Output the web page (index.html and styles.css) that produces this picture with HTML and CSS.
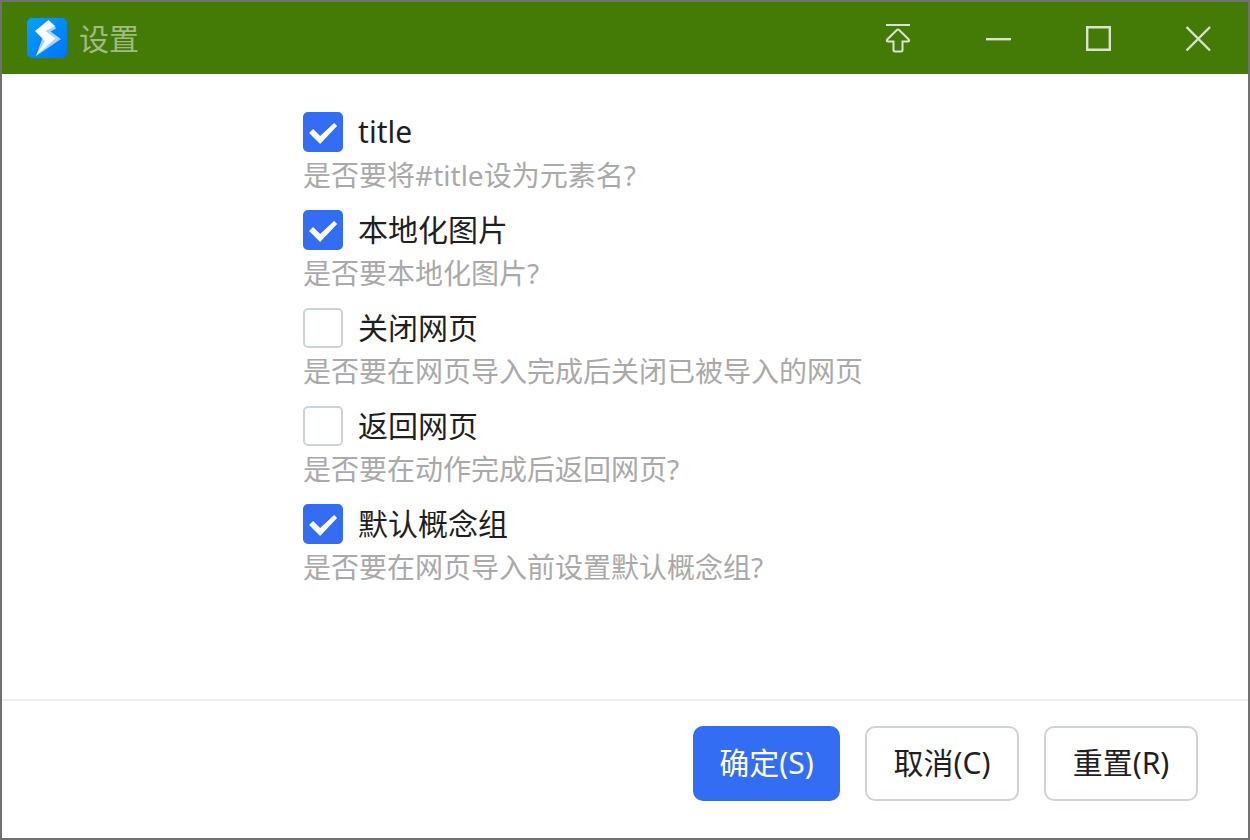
FILE: index.html
```html
<!DOCTYPE html>
<html lang="zh-CN">
<head>
    <meta charset="UTF-8">
    <meta name="viewport" content="width=device-width, initial-scale=1.0">
    <title>设置</title>
    <link rel="stylesheet" href="styles.css">
</head>
<body>
    <div class="window">
        <header class="titlebar">
            <svg class="logo" viewBox="0 0 40 40" aria-hidden="true">
                <defs>
                    <linearGradient id="logoBg" x1="0" y1="0" x2="1" y2="1">
                        <stop offset="0" stop-color="#00a2ff"/>
                        <stop offset="1" stop-color="#0072ff"/>
                    </linearGradient>
                </defs>
                <rect width="40" height="40" rx="5" fill="url(#logoBg)"/>
                <path d="M27 7L29 10.500L23.500 13.500L34 21L9 38L18 13Z" fill="#a6d5ff"/>
                <path d="M21.500 2L28 8L18.500 13L28.500 20.500L9 37.500L18 23L8 13Z" fill="#fff"/>
            </svg>
            <h1>设置</h1>
            <div class="window-buttons">
                <button type="button" aria-label="置顶">
                    <svg viewBox="0 0 28 32">
                        <path d="M2 3H26"/>
                        <path d="M14 7.500Q14.700 7.500 15.400 8.200L24.300 17Q26.200 19.300 24 19.500H18.500V28Q18.500 29.500 17 29.500H11Q9.500 29.500 9.500 28V19.500H4Q1.800 19.300 3.700 17L12.600 8.200Q13.300 7.500 14 7.500Z"/>
                    </svg>
                </button>
                <button type="button" aria-label="最小化">
                    <svg viewBox="0 0 28 32"><path d="M2 17.200H27" stroke-width="2.400"/></svg>
                </button>
                <button type="button" aria-label="最大化">
                    <svg viewBox="0 0 28 32"><path d="M3.200 5.200H25.800V27.800H3.200Z" stroke-width="2.400"/></svg>
                </button>
                <button type="button" aria-label="关闭">
                    <svg viewBox="0 0 28 32"><path d="M2.500 5L26 28.500M26 5L2.500 28.500" stroke-width="2.400"/></svg>
                </button>
            </div>
        </header>

        <form class="settings" id="settingsForm">
            <div class="item">
                <label><input type="checkbox" checked aria-describedby="d1">title</label>
                <p id="d1">是否要将#title设为元素名?</p>
            </div>
            <div class="item">
                <label><input type="checkbox" checked aria-describedby="d2">本地化图片</label>
                <p id="d2">是否要本地化图片?</p>
            </div>
            <div class="item">
                <label><input type="checkbox" aria-describedby="d3">关闭网页</label>
                <p id="d3">是否要在网页导入完成后关闭已被导入的网页</p>
            </div>
            <div class="item">
                <label><input type="checkbox" aria-describedby="d4">返回网页</label>
                <p id="d4">是否要在动作完成后返回网页?</p>
            </div>
            <div class="item">
                <label><input type="checkbox" checked aria-describedby="d5">默认概念组</label>
                <p id="d5">是否要在网页导入前设置默认概念组?</p>
            </div>
        </form>

        <footer class="actions">
            <button type="submit" form="settingsForm" class="btn btn-primary">确定(S)</button>
            <button type="button" class="btn">取消(C)</button>
            <button type="reset" form="settingsForm" class="btn">重置(R)</button>
        </footer>
    </div>
</body>
</html>
```

FILE: styles.css
```css
* {
    margin: 0;
    padding: 0;
    box-sizing: border-box;
}

body {
    font-family: "Noto Sans", "Noto Sans CJK SC", sans-serif;
    font-size: 30px;
    font-weight: 400;
    color: #1f1f1f;
    background: #fff;
}

button {
    font: inherit;
    color: inherit;
    cursor: pointer;
}

.window {
    display: flex;
    flex-direction: column;
    min-height: 100vh;
    border: 2px solid #717171;
}

/* Title bar */
.titlebar {
    display: flex;
    align-items: center;
    height: 72px;
    padding-left: 25px;
    background: #447a06;
}

.logo {
    width: 40px;
    height: 40px;
    margin-right: 12px;
}

.titlebar h1 {
    padding-top: 2px;
    font-size: 30px;
    font-weight: 400;
    line-height: 40px;
    color: #a1bc82;
}

.window-buttons {
    display: flex;
    height: 100%;
    margin-left: auto;
}

.window-buttons button {
    display: flex;
    align-items: center;
    justify-content: center;
    width: 100px;
    border: none;
    background: none;
}

.window-buttons button:hover {
    background: rgba(255, 255, 255, 0.15);
}

.window-buttons svg {
    width: 28px;
    height: 32px;
    fill: none;
    stroke: #dae4cd;
    stroke-width: 2;
}

/* Settings list */
.settings {
    flex: 1;
    display: flex;
    flex-direction: column;
    gap: 12px;
    margin: 0 27px;
    padding: 38px 0 38px 22%;
}

.item label {
    display: flex;
    align-items: flex-start;
    gap: 15px;
    width: fit-content;
    height: 40px;
    line-height: 40px;
    cursor: pointer;
}

.item p {
    font-size: 28px;
    line-height: 46px;
    color: #a9a9a9;
}

.item input {
    appearance: none;
    display: flex;
    width: 40px;
    height: 40px;
    border: 2px solid #ced3da;
    border-radius: 5px;
    background: #fff;
    cursor: pointer;
}

.item input:checked {
    border-color: #336df4;
    background: #336df4;
}

.item input:checked::before {
    content: "";
    width: 36px;
    height: 36px;
    background: #fff;
    clip-path: polygon(4px 19px, 8px 15px, 15px 22px, 29px 9px, 32px 12px, 15px 30px);
}

/* Footer buttons */
.actions {
    display: flex;
    justify-content: flex-end;
    gap: 25px;
    padding: 25px 50px 37px;
    border-top: 2px solid #f0f0f0;
}

.btn {
    min-width: 154px;
    height: 75px;
    padding: 0 23px 2px;
    border: 2px solid #ced3da;
    border-radius: 10px;
    background: #fff;
    line-height: 40px;
}

.btn-primary {
    min-width: 147px;
    border-color: #336df4;
    background: #336df4;
    color: #fff;
}
```
